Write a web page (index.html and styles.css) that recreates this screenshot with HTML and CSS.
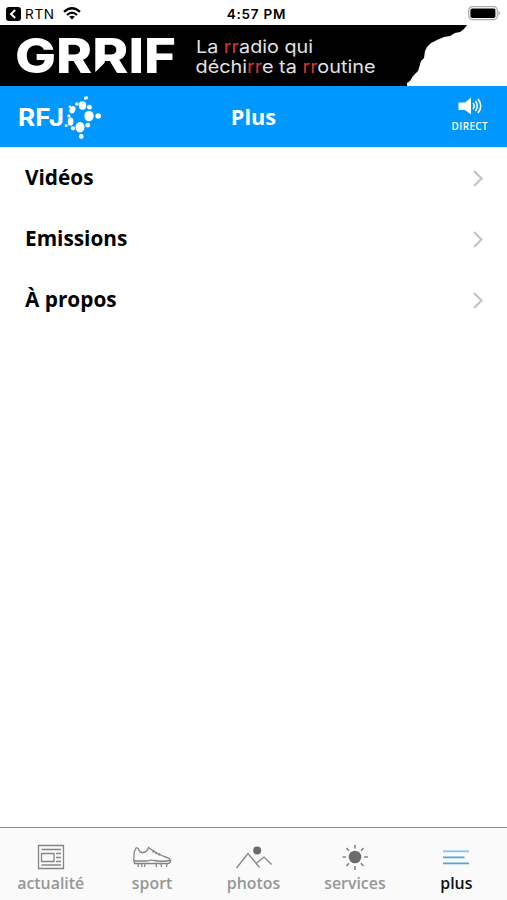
FILE: index.html
```html
<!DOCTYPE html>
<html lang="fr">
<head>
<meta charset="utf-8">
<title>Plus</title>
<link rel="stylesheet" href="styles.css">
</head>
<body>
<div class="app">
  <div class="status">
    <div class="status-left">
      <svg width="15" height="14" viewBox="0 0 15 14"><rect width="15" height="14" rx="3" fill="#000"/><path d="M9.2 3 5 7l4.2 4" fill="none" stroke="#fff" stroke-width="2"/></svg>
      <span class="back">RTN</span>
      <svg class="wifi" width="18" height="13" viewBox="0 0 18 13" fill="none" stroke="#000" stroke-width="2.3"><path d="M1 4.8Q9-2.2 17 4.8M4 8Q9 3.3 14 8"/><path d="M9 12.6 6.2 9.8Q9 7.6 11.8 9.8Z" fill="#000" stroke="none"/></svg>
    </div>
    <span class="time">4:57 PM</span>
    <svg class="battery" width="32" height="15" viewBox="0 0 32 15"><rect x=".7" y=".7" width="28.6" height="13" rx="3.6" fill="#fff" stroke="#aaa" stroke-width="1.2"/><rect x="2.4" y="2.6" width="25" height="9.4" rx="1.8"/><path d="M30.5 5v4.5q1.3-.6 1.3-2.2T30.5 5" fill="#999"/></svg>
  </div>
  <svg class="banner" width="507" height="61" viewBox="0 0 507 61">
    <path d="M0 0H467L464 4 460 7 455 8 450 11 444 12 437 15 431 18 427 22 425 26 424 33 421 36 419 43 418 46 413 51 410 56 407 58 407 61H0Z"/>
    <text class="brand" x="15" y="47.5" textLength="161" lengthAdjust="spacingAndGlyphs">GRRIF</text>
    <path d="M105.500 37V50H92.500Z"/>
    <text class="slogan" x="196" y="28.2" textLength="117" lengthAdjust="spacingAndGlyphs">La <tspan class="red">rr</tspan>adio qui</text>
    <text class="slogan" x="195.5" y="48.4" textLength="180" lengthAdjust="spacingAndGlyphs">déchi<tspan class="red">rr</tspan>e ta <tspan class="red">rr</tspan>outine</text>
  </svg>
  <header class="header">
    <svg class="logo" width="84" height="44" viewBox="0 0 84 44" fill="#fff">
      <text class="logo-text" x="-1" y="30.6" textLength="46" lengthAdjust="spacingAndGlyphs">RFJ</text>
      <g transform="translate(-1 -.5)">
      <ellipse cx="68" cy="3.5" rx="2.2" ry="1.6" transform="rotate(-25 68 3.5)"/>
      <ellipse cx="64.5" cy="11" rx="3.8" ry="4.3"/>
      <circle cx="58.8" cy="9.5" r="1.7"/><circle cx="71.5" cy="12.7" r="2.4"/>
      <ellipse cx="54.5" cy="15.2" rx="2.8" ry="3.8" transform="rotate(25 54.5 15.2)"/>
      <circle cx="52" cy="12.3" r="1.4"/>
      <ellipse cx="71" cy="21.5" rx="4.7" ry="5.2"/><circle cx="80.2" cy="21.5" r="2.8"/>
      <circle cx="50.9" cy="21.3" r="1.6"/><ellipse cx="52.6" cy="27.1" rx="2.8" ry="4.2"/>
      <circle cx="48.2" cy="31" r="1.5"/><circle cx="55" cy="33.8" r="2.1"/>
      <ellipse cx="62" cy="32.8" rx="4.5" ry="5.2"/><circle cx="69.7" cy="30.7" r="2.4"/>
      <circle cx="63.3" cy="42" r="2.4"/>
      </g>
    </svg>
    <h1 class="title">Plus</h1>
    <div class="direct">
      <svg width="24" height="18" viewBox="0 0 24 18"><path d="M.5 5.5H7L13 .5v17L7 13H.5Z" fill="#fff"/><path d="M15 6Q17.3 9 15 12M17.5 4Q21 9 17.5 14M20 2Q25.5 9 20 16" fill="none" stroke="#fff" stroke-width="1.6"/></svg>
      <span>DIRECT</span>
    </div>
  </header>
  <main class="list">
    <div class="row"><span>Vidéos</span><svg width="12" height="18" viewBox="0 0 12 18"><path d="M2 2 9.5 9.5 2 17"/></svg></div>
    <div class="row"><span>Emissions</span><svg width="12" height="18" viewBox="0 0 12 18"><path d="M2 2 9.5 9.5 2 17"/></svg></div>
    <div class="row"><span>À propos</span><svg width="12" height="18" viewBox="0 0 12 18"><path d="M2 2 9.5 9.5 2 17"/></svg></div>
  </main>
  <nav class="tabs">
    <div class="tab">
      <svg width="40" height="28" viewBox="0 0 40 28"><path d="M7.5 2.500h25v23h-25ZM10.500 10.500h12.500v8H10.500ZM10.500 6.500h19.500M25 10.500h5M25 14.500h5M25 18.500h5M10.500 22h19.500"/></svg>
      <span>actualité</span>
    </div>
    <div class="tab">
      <svg width="40" height="28" viewBox="0 0 40 28"><path d="M4 5Q1.500 9 2 13 1.500 18 2.500 20.500H36Q39 20 38.500 17.500 38 15 32 13.500 26 11.500 20 7L16.500 4.500Q15 9 11.500 9.500 7.500 10 6.500 6 6 4.500 4 5ZM2.500 18H15.500Q19 16.500 22 17.500 30 19 38 17.500"/><path d="M6 20.500 6.500 24M9.500 20.500 10 24M13 20.500 12.500 24M24 20.500 24.500 24M29 20.500 29.500 24M35 20.500 34.500 24M20.500 9.500 22 7.500M23.500 11.200 25 9.200M26.500 12.500 28 10.500"/></svg>
      <span>sport</span>
    </div>
    <div class="tab">
      <svg width="40" height="28" viewBox="0 0 40 28"><path d="M2.500 25 14 10.500 25.500 24.500M22 20.500 30 14 37.500 21.500"/><circle class="solid" cx="23.200" cy="7.500" r="4"/></svg>
      <span>photos</span>
    </div>
    <div class="tab">
      <svg width="40" height="28" viewBox="0 0 40 28"><circle class="solid" cx="20" cy="14" r="6.300"/><path class="rays" d="M20 2v3.500M20 23v4M7.500 14H11M29 14h4M11.500 5 14 7.800M28.500 5 26 7.800M11.500 23 14 20.200M28.500 23 26 20.200"/></svg>
      <span>services</span>
    </div>
    <div class="tab active">
      <svg width="40" height="28" viewBox="0 0 40 28"><path class="bar-light" d="M7 8.300H33"/><path d="M7 14.300H28.500M7 20.400H33"/></svg>
      <span>plus</span>
    </div>
  </nav>
</div>
</body>
</html>
```

FILE: styles.css
```css
* { box-sizing: border-box; }
body { margin: 0; background: #fff; font-family: "Open Sans", "Noto Sans", sans-serif; color: #000; }
svg { display: block; }
.app { display: flex; flex-direction: column; width: 507px; height: 900px; overflow: hidden; }
.status {
  display: grid; grid-template-columns: 1fr auto 1fr; align-items: center;
  height: 25px; padding: 2px 7px 0 6px; font: 13.5px/20px Inter, sans-serif;
}
.status-left { display: flex; align-items: center; }
.back { margin-left: 4px; letter-spacing: .7px; }
.wifi { margin-left: 8px; }
.time { padding-left: 7px; font-weight: 600; letter-spacing: .75px; }
.battery { justify-self: end; }
.banner { flex: none; height: 61px; }
.brand { font: 800 48px Inter, sans-serif; fill: #fff; }
.slogan { font: 400 17.5px Inter, sans-serif; fill: #e2e2e2; }
.red { fill: #d73535; }
.header {
  display: grid; grid-template-columns: 1fr auto 1fr; align-items: center;
  flex: none; height: 61px; padding: 0 19px; background: #0097ff; color: #fff;
}
.logo { overflow: visible; }
.logo-text { font: 700 24px Inter, sans-serif; }
.title { margin: 0; font-size: 21.7px; line-height: 30px; font-weight: 700; }
.direct { justify-self: end; display: flex; flex-direction: column; align-items: center; padding-bottom: 3px; font-size: 10px; line-height: 14px; font-weight: 600; gap: 4px; letter-spacing: .35px; }
.list { flex: 1; }
.row { display: flex; justify-content: space-between; align-items: center; height: 61px; padding: 0 23px 0 25px; font-size: 20.8px; font-weight: 700; }
.row span { padding-bottom: 2px; }
.row path { fill: none; stroke: #c4c4c7; stroke-width: 2.2; }
.tabs { display: flex; flex: none; height: 73px; padding-top: 15px; border-top: 1px solid #8c8c8c; background: #fafafa; }
.tab { flex: 1; display: flex; flex-direction: column; align-items: center; color: #979797; font-size: 15.9px; line-height: 24px; font-weight: 600; }
.tab path { fill: none; stroke: #858585; stroke-width: 1.3; }
.tab .solid { fill: #6c6c6c; }
.tab .rays { stroke-width: 1.6; }
.tab.active { color: #111; }
.tab.active path { stroke: #45a9e8; stroke-width: 1.8; }
.tab.active .bar-light { stroke: #7fc4f2; }
```
